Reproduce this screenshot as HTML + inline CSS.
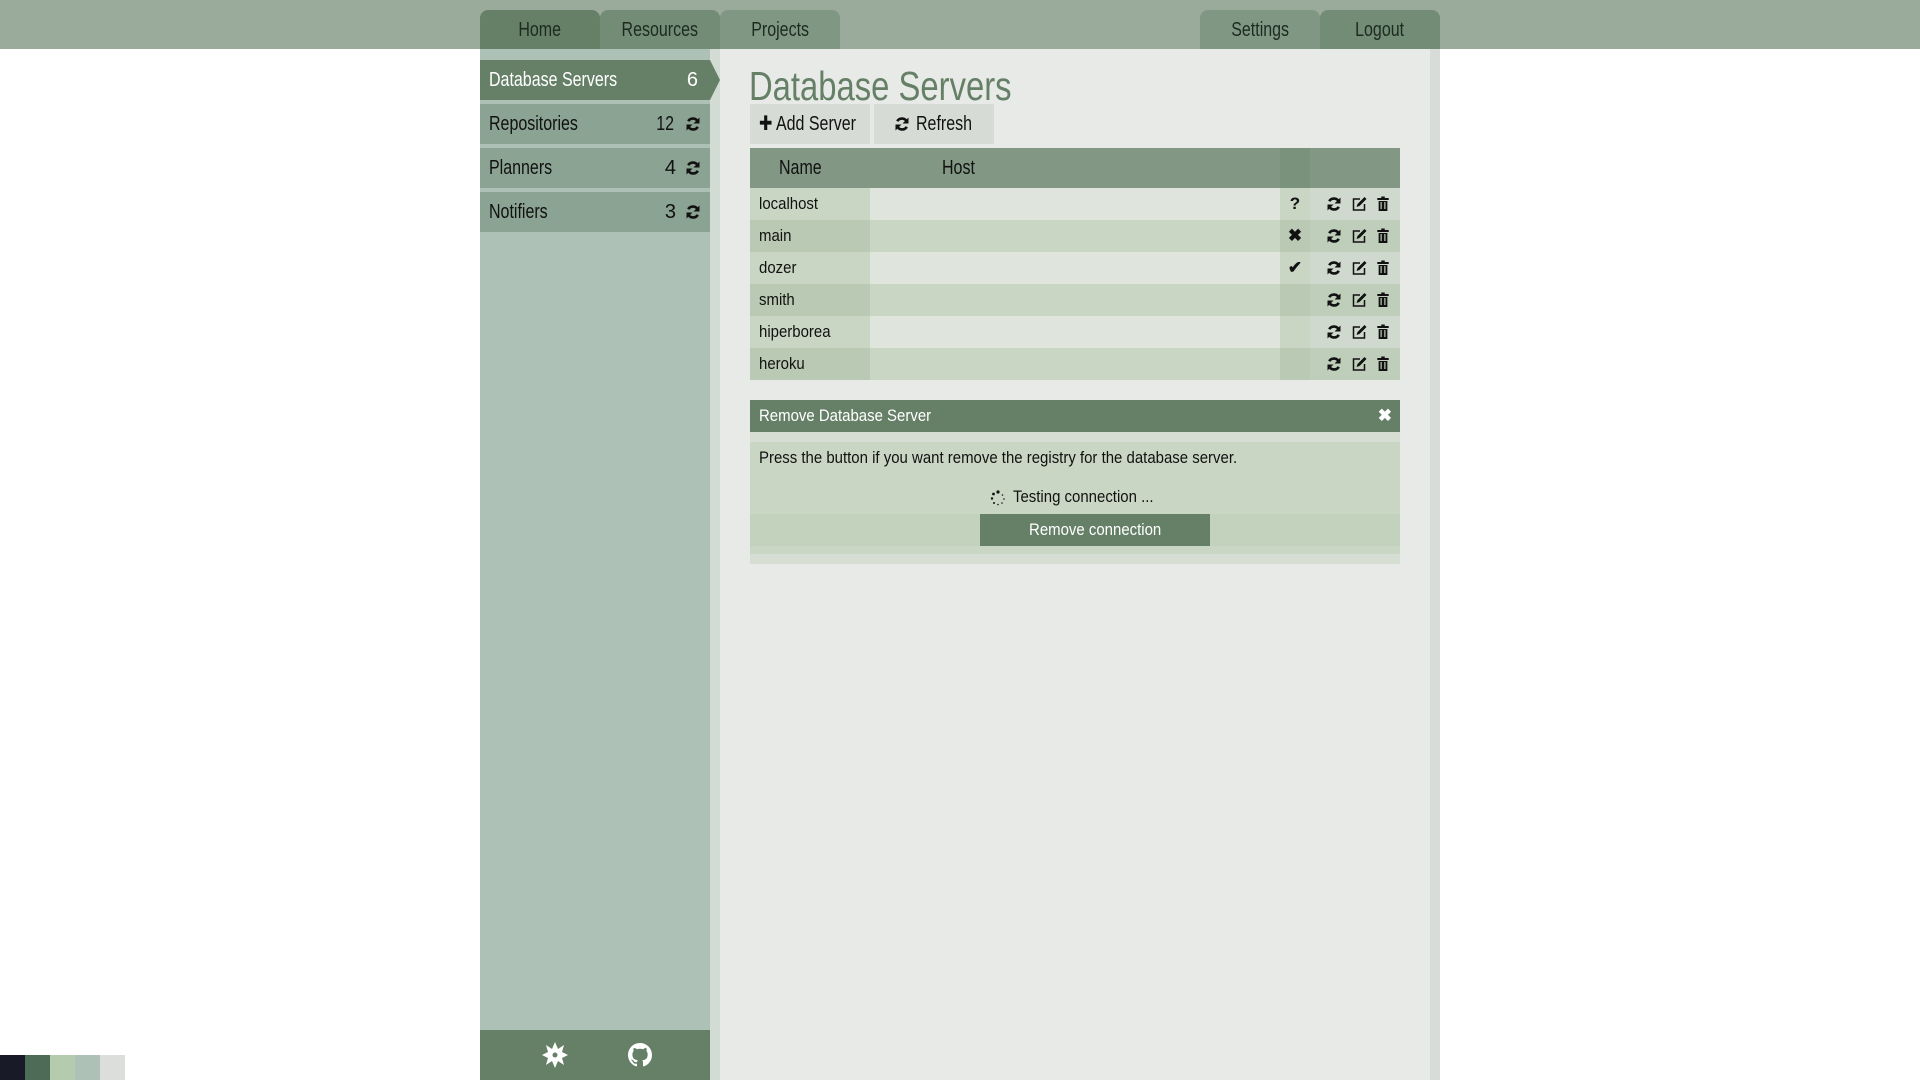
<!DOCTYPE html>
<html><head><meta charset="utf-8"><style>
*{margin:0;padding:0;box-sizing:border-box}
body{width:1920px;height:1080px;background:#fff;font-family:"Liberation Sans",sans-serif;position:relative;overflow:hidden;color:#111}
.abs{position:absolute}
.s{display:inline-block;transform:scaleX(.8);transform-origin:left center;white-space:nowrap}
.s2{display:inline-block;transform:scaleX(.88);transform-origin:left center;white-space:nowrap}
.sc{display:inline-block;transform:scaleX(.8);transform-origin:center center;white-space:nowrap}
.sc2{display:inline-block;transform:scaleX(.88);transform-origin:center center;white-space:nowrap}
.top{left:0;top:0;width:1920px;height:49px;background:#9bab9b}
.tab{top:10px;height:39px;width:120px;border-radius:8px 8px 0 0;text-align:center;font-size:20px;line-height:40px;color:#1d2a20}
.side{left:480px;top:49px;width:230px;height:1031px;background:#adc1b7}
.strip{left:710px;top:49px;width:10px;height:1031px;background:#d3dbd5}
.main{left:720px;top:49px;width:710px;height:1031px;background:#e8eae7}
.rb{left:1430px;top:49px;width:10px;height:1031px;background:#d8dcd8}
.si{left:480px;width:230px;height:40px;background:#8ba392;font-size:20px;line-height:40px;padding-left:9px;color:#111}
.si .n{position:absolute;right:10px;top:0}
.btn{top:104px;height:40px;width:120px;background:#d6dbd5;font-size:20px;line-height:40px;text-align:center;white-space:nowrap}
.row{left:750px;width:650px;height:32px;font-size:17px;line-height:32px}
.row .c1{position:absolute;left:0;top:0;width:120px;height:32px;padding-left:9px}
.row .c3{position:absolute;left:530px;top:0;width:30px;height:32px;text-align:center}
</style></head><body>
<div class="abs top"></div>
<div class="abs tab" style="left:480px;background:#668068"><span class="sc">Home</span></div>
<div class="abs tab" style="left:600px;background:#738c76"><span class="sc">Resources</span></div>
<div class="abs tab" style="left:720px;background:#809783"><span class="sc">Projects</span></div>
<div class="abs tab" style="left:1200px;background:#809783"><span class="sc">Settings</span></div>
<div class="abs tab" style="left:1320px;background:#738c76"><span class="sc">Logout</span></div>
<div class="abs side"></div><div class="abs strip"></div><div class="abs main"></div><div class="abs rb"></div>

<div class="abs si" style="top:60px;background:#668068;color:#fff"><span class="s">Database Servers</span><span class="n" style="right:12px">6</span></div>
<svg class="abs" style="left:710px;top:60px" width="10" height="40"><polygon points="0,0 0,40 10,20" fill="#668068"/></svg>
<div class="abs si" style="top:104px"><span class="s">Repositories</span><span class="n" style="right:34px"><span class="sc">12</span></span></div>
<div class="abs si" style="top:148px"><span class="s">Planners</span><span class="n" style="right:34px">4</span></div>
<div class="abs si" style="top:192px"><span class="s">Notifiers</span><span class="n" style="right:34px">3</span></div>
<svg width="0" height="0" style="position:absolute"><defs>
<symbol id="rf" viewBox="0 0 16 16"><path d="M13 6A5.5 5.5 0 0 0 3.2 5.2M3 10a5.5 5.5 0 0 0 9.8.8" fill="none" stroke="#111" stroke-width="2.6"/><polygon points="14.5,1.5 14.5,7.5 8.5,7.5" fill="#111"/><polygon points="1.5,14.5 1.5,8.5 7.5,8.5" fill="#111"/></symbol>
<symbol id="ed" viewBox="0 0 16 16"><path d="M9 3H2.5v11h11V8" fill="none" stroke="#111" stroke-width="1.5"/><path d="M13.5 1l2 2-7 7-3 1 1-3z" fill="#111"/></symbol>
<symbol id="tr" viewBox="0 0 16 16"><rect x="1.5" y="2" width="13" height="2" fill="#111"/><rect x="6" y="0.5" width="4" height="2" fill="#111"/><path d="M3 5h10v10H3z" fill="#111"/><rect x="5.2" y="6" width="1.3" height="7" fill="#c9d6c3"/><rect x="9.5" y="6" width="1.3" height="7" fill="#c9d6c3"/></symbol>
</defs></svg>
<svg class="abs" style="left:685px;top:116px" width="16" height="16"><use href="#rf"/></svg>
<svg class="abs" style="left:685px;top:160px" width="16" height="16"><use href="#rf"/></svg>
<svg class="abs" style="left:685px;top:204px" width="16" height="16"><use href="#rf"/></svg>

<div class="abs" style="left:480px;top:1030px;width:230px;height:50px;background:#668068"></div>
<svg class="abs" style="left:540px;top:1040px" width="30" height="30" viewBox="-15 -15 30 30"><polygon points="0,-13 3,-6 9,-10 7,-3 13,0 7,3 9,10 3,6 0,13 -3,6 -9,10 -7,3 -13,0 -7,-3 -9,-10 -3,-6" fill="#fff"/><circle r="2.5" fill="#668068"/></svg>
<svg class="abs" style="left:628px;top:1043px" width="24" height="24" viewBox="0 0 16 16"><path fill="#fff" d="M8 0C3.58 0 0 3.58 0 8c0 3.540 2.29 6.53 5.47 7.59.4.07.55-.17.55-.38 0-.19-.01-.82-.01-1.49-2.010.37-2.53-.49-2.690-.94-.09-.23-.48-.94-.82-1.13-.28-.15-.68-.52-.01-.53.63-.01 1.08.58 1.23.82.72 1.21 1.87.87 2.33.66.07-.52.28-.87.51-1.07-1.78-.2-3.64-.89-3.64-3.95 0-.87.31-1.59.82-2.150-.08-.2-.36-1.02.08-2.12 0 0 .67-.21 2.2.82.64-.18 1.32-.27 2-.27.68 0 1.36.09 2 .27 1.53-1.04 2.2-.82 2.2-.82.44 1.1.16 1.92.08 2.12.51.56.82 1.27.82 2.15 0 3.07-1.87 3.75-3.65 3.95.29.25.54.73.54 1.48 0 1.07-.01 1.93-.01 2.2 0 .21.15.46.55.38A8.013 8.013 0 0016 8c0-4.42-3.58-8-8-8z"/></svg>

<div class="abs" style="left:749px;top:61px;font-size:41px;line-height:50px;color:#668068"><span class="s">Database Servers</span></div>
<div class="abs btn" style="left:750px;text-align:left;padding-left:9px"><span class="s">✚ Add Server</span></div>
<div class="abs btn" style="left:874px;text-align:left;padding-left:20px"><svg width="16" height="16" style="vertical-align:-2px"><use href="#rf"/></svg> <span class="s">Refresh</span></div>

<div class="abs" style="left:750px;top:148px;width:650px;height:40px;background:#829884;font-size:20px;line-height:40px"><span class="abs" style="left:29px"><span class="s">Name</span></span><span class="abs" style="left:192px"><span class="s">Host</span></span><span class="abs" style="left:530px;width:30px;height:40px;background:#7a917c"></span></div>

<div class="abs row" style="top:188px;background:#dfe4dd"><div class="c1" style="background:#c9d6c3"><span class="s2">localhost</span></div><div class="c3" style="background:#c9d6c3;font-weight:bold">?</div></div>
<div class="abs row" style="top:220px;background:#cad6c4"><div class="c1" style="background:#b9c9b3"><span class="s2">main</span></div><div class="c3" style="background:#b9c9b3;font-weight:bold">✖</div></div>
<div class="abs row" style="top:252px;background:#dfe4dd"><div class="c1" style="background:#c9d6c3"><span class="s2">dozer</span></div><div class="c3" style="background:#c9d6c3;font-weight:bold">✔</div></div>
<div class="abs row" style="top:284px;background:#cad6c4"><div class="c1" style="background:#b9c9b3"><span class="s2">smith</span></div><div class="c3" style="background:#b9c9b3"></div></div>
<div class="abs row" style="top:316px;background:#dfe4dd"><div class="c1" style="background:#c9d6c3"><span class="s2">hiperborea</span></div><div class="c3" style="background:#c9d6c3"></div></div>
<div class="abs row" style="top:348px;background:#cad6c4"><div class="c1" style="background:#b9c9b3"><span class="s2">heroku</span></div><div class="c3" style="background:#b9c9b3"></div></div>
<div class="abs" style="left:1310px;top:188px;width:90px;height:192px;background:rgba(160,185,160,0.25)"></div>
<div class="abs" style="left:1326px;top:188px">
<svg class="abs" style="left:0;top:8px" width="16" height="16"><use href="#rf"/></svg><svg class="abs" style="left:25px;top:8px" width="16" height="16"><use href="#ed"/></svg><svg class="abs" style="left:50px;top:8px" width="14" height="16" viewBox="0 0 16 16" preserveAspectRatio="none"><use href="#tr"/></svg>
<svg class="abs" style="left:0;top:40px" width="16" height="16"><use href="#rf"/></svg><svg class="abs" style="left:25px;top:40px" width="16" height="16"><use href="#ed"/></svg><svg class="abs" style="left:50px;top:40px" width="14" height="16" viewBox="0 0 16 16" preserveAspectRatio="none"><use href="#tr"/></svg>
<svg class="abs" style="left:0;top:72px" width="16" height="16"><use href="#rf"/></svg><svg class="abs" style="left:25px;top:72px" width="16" height="16"><use href="#ed"/></svg><svg class="abs" style="left:50px;top:72px" width="14" height="16" viewBox="0 0 16 16" preserveAspectRatio="none"><use href="#tr"/></svg>
<svg class="abs" style="left:0;top:104px" width="16" height="16"><use href="#rf"/></svg><svg class="abs" style="left:25px;top:104px" width="16" height="16"><use href="#ed"/></svg><svg class="abs" style="left:50px;top:104px" width="14" height="16" viewBox="0 0 16 16" preserveAspectRatio="none"><use href="#tr"/></svg>
<svg class="abs" style="left:0;top:136px" width="16" height="16"><use href="#rf"/></svg><svg class="abs" style="left:25px;top:136px" width="16" height="16"><use href="#ed"/></svg><svg class="abs" style="left:50px;top:136px" width="14" height="16" viewBox="0 0 16 16" preserveAspectRatio="none"><use href="#tr"/></svg>
<svg class="abs" style="left:0;top:168px" width="16" height="16"><use href="#rf"/></svg><svg class="abs" style="left:25px;top:168px" width="16" height="16"><use href="#ed"/></svg><svg class="abs" style="left:50px;top:168px" width="14" height="16" viewBox="0 0 16 16" preserveAspectRatio="none"><use href="#tr"/></svg>
</div>

<div class="abs" style="left:750px;top:400px;width:650px;height:32px;background:#668068;color:#fff;font-size:17px;line-height:32px;padding-left:9px"><span class="s2">Remove Database Server</span><span class="abs" style="right:8px;top:0;font-weight:bold">✖</span></div>
<div class="abs" style="left:750px;top:432px;width:650px;height:132px;background:#d6ddd3"></div>
<div class="abs" style="left:750px;top:442px;width:650px;height:32px;background:#c9d6c3;font-size:17px;line-height:32px;padding-left:9px"><span class="s2">Press the button if you want remove the registry for the database server.</span></div>
<div class="abs" style="left:750px;top:474px;width:650px;height:40px;background:#c9d6c3"></div>
<svg class="abs" style="left:990px;top:490px" width="16" height="16" viewBox="0 0 16 16"><g fill="#111"><circle cx="8" cy="2" r="1.6"/><circle cx="3.5" cy="4" r="1.4"/><circle cx="2" cy="8.5" r="1.2"/><circle cx="4" cy="13" r="1"/><circle cx="12.5" cy="5" r=".8"/><circle cx="14" cy="9" r=".8"/><circle cx="12" cy="13" r=".8"/><circle cx="8" cy="14.5" r=".8"/></g></svg>
<div class="abs" style="left:1013px;top:474px;font-size:17px;line-height:46px"><span class="s2">Testing connection ...</span></div>
<div class="abs" style="left:750px;top:514px;width:650px;height:32px;background:#c2d2bd"></div>
<div class="abs" style="left:980px;top:514px;width:230px;height:32px;background:#668068;color:#fff;font-size:17px;line-height:32px;text-align:center"><span class="sc2">Remove connection</span></div>
<div class="abs" style="left:750px;top:546px;width:650px;height:8px;background:#c9d6c3"></div>

<div class="abs" style="left:0;top:1055px;width:25px;height:25px;background:#191a28"></div>
<div class="abs" style="left:25px;top:1055px;width:25px;height:25px;background:#4e6b58"></div>
<div class="abs" style="left:50px;top:1055px;width:25px;height:25px;background:#b5cbae"></div>
<div class="abs" style="left:75px;top:1055px;width:25px;height:25px;background:#adc1b7"></div>
<div class="abs" style="left:100px;top:1055px;width:25px;height:25px;background:#dcdedc"></div>
</body></html>
